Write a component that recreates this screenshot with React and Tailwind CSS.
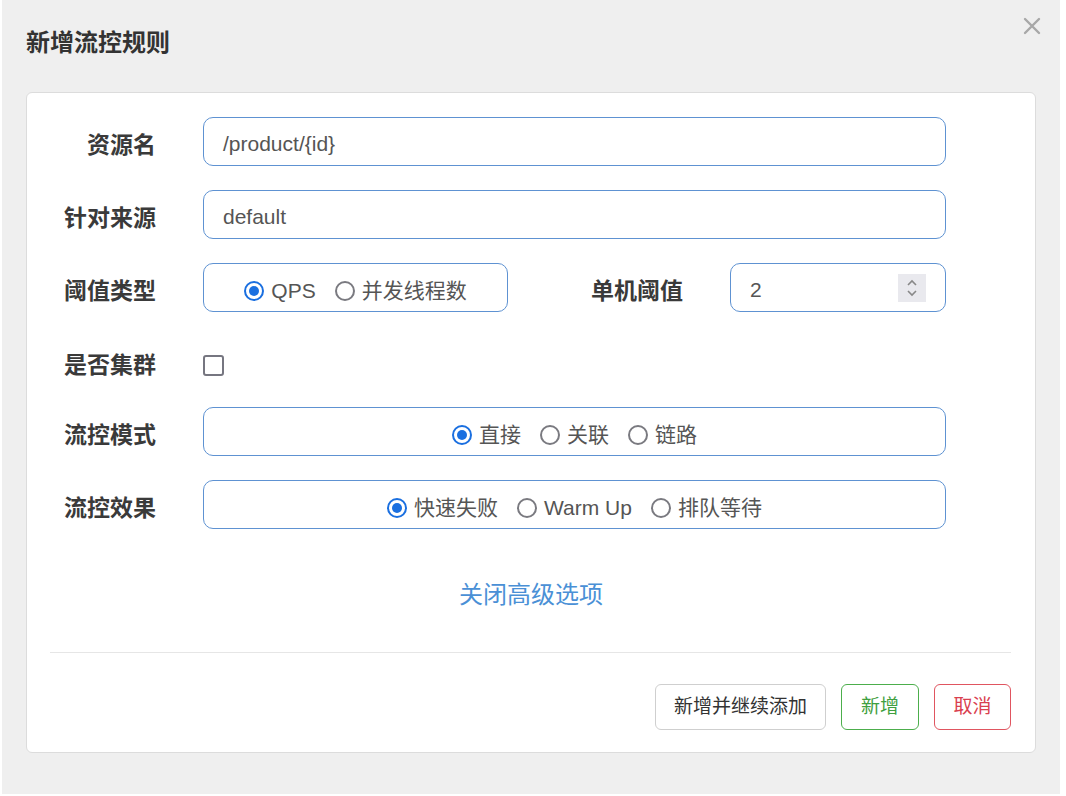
import React from "react";

const font = { fontFamily: '"Liberation Sans", "Noto Sans CJK SC", sans-serif' };

function Radio({ checked, label }) {
  return (
    <label className="flex items-center gap-[7px] text-[21px] text-[#555] leading-none">
      <span
        className={
          checked
            ? "w-[20px] h-[20px] rounded-full border-[2px] border-[#1a6fe0] flex items-center justify-center"
            : "w-[20px] h-[20px] rounded-full border-[2px] border-[#7a7a80]"
        }
      >
        {checked && <span className="w-[10px] h-[10px] rounded-full bg-[#1a6fe0]" />}
      </span>
      <span>{label}</span>
    </label>
  );
}

function Label({ children }) {
  return (
    <div className="w-[129px] shrink-0 mt-[7px] text-right text-[23px] font-bold text-[#3a3a3a] leading-none">
      {children}
    </div>
  );
}

function RadioBox({ options, className }) {
  return (
    <div
      className={
        "h-[49px] pt-[6px] border border-[#5e92d2] rounded-[10px] flex items-center justify-center gap-[19px] " +
        className
      }
    >
      {options.map((o, i) => (
        <Radio key={o} checked={i === 0} label={o} />
      ))}
    </div>
  );
}

export default function App() {
  return (
    <div className="bg-white w-[1066px] h-[796px] pl-[2px]" style={font}>
      <div className="w-[1058px] h-[794px] bg-[#efefef] px-[24px] flex flex-col">
        <div className="h-[92px] flex items-center justify-between pb-[6px]">
          <h1 className="text-[24px] font-bold text-[#333] leading-none">新增流控规则</h1>
          <svg width="18" height="18" viewBox="0 0 18 18" className="mr-[-5px] mb-[34px]">
            <path d="M2 2 L16 16 M16 2 L2 16" stroke="#a8a8a8" strokeWidth="2.4" strokeLinecap="round" />
          </svg>
        </div>

        <div className="w-[1010px] h-[661px] bg-white border border-[#dcdcdc] rounded-[6px] pt-[24px] pr-[89px] flex flex-col">
          <div className="flex flex-col gap-[24px]">
            <div className="flex items-center gap-[47px]">
              <Label>资源名</Label>
              <div className="flex-1 h-[49px] pt-[5px] border border-[#5e92d2] rounded-[10px] px-[19px] flex items-center text-[21px] text-[#555]">
                /product/{"{id}"}
              </div>
            </div>

            <div className="flex items-center gap-[47px]">
              <Label>针对来源</Label>
              <div className="flex-1 h-[49px] pt-[5px] border border-[#5e92d2] rounded-[10px] px-[19px] flex items-center text-[21px] text-[#555]">
                default
              </div>
            </div>

            <div className="flex items-center">
              <Label>阈值类型</Label>
              <RadioBox className="ml-[47px] w-[305px]" options={["QPS", "并发线程数"]} />
              <div className="ml-[79px] mt-[7px] w-[96px] text-right text-[23px] font-bold text-[#3a3a3a] leading-none">单机阈值</div>
              <div className="ml-[47px] flex-1 h-[49px] border border-[#5e92d2] rounded-[10px] pl-[19px] pr-[19px] flex items-center justify-between text-[21px] text-[#555]">
                <span className="mt-[5px]">2</span>
                <span className="w-[28px] h-[28px] bg-[#e9e9ee] flex items-center justify-center">
                  <svg width="14" height="20" viewBox="0 0 14 20">
                    <path d="M3 7 L7 3 L11 7 M3 13 L7 17 L11 13" fill="none" stroke="#888" strokeWidth="1.6" />
                  </svg>
                </span>
              </div>
            </div>

            <div className="flex items-center gap-[47px] h-[47px] pt-[12px]">
              <div className="w-[129px] shrink-0 text-right text-[23px] font-bold text-[#3a3a3a] leading-none">
                是否集群
              </div>
              <span className="w-[21px] h-[21px] border-[2px] border-[#767680] rounded-[3px]" />
            </div>

            <div className="flex items-center gap-[47px]">
              <Label>流控模式</Label>
              <RadioBox className="flex-1" options={["直接", "关联", "链路"]} />
            </div>

            <div className="flex items-center gap-[47px]">
              <Label>流控效果</Label>
              <RadioBox className="flex-1" options={["快速失败", "Warm Up", "排队等待"]} />
            </div>
          </div>

          <div className="h-[123px] pt-[8px] flex items-center justify-center pl-[89px]">
            <a className="text-[24px] text-[#4a90d6] leading-none">关闭高级选项</a>
          </div>

          <div className="ml-[23px] mr-[-65px] border-t border-[#e6e6e6]" />

          <div className="flex justify-end gap-[15px] mr-[-65px] mt-[31px]">
            <button className="w-[171px] h-[46px] border border-[#cfcfcf] rounded-[6px] text-[19px] text-[#333] bg-white">
              新增并继续添加
            </button>
            <button className="w-[78px] h-[46px] border border-[#4cae4c] rounded-[6px] text-[19px] text-[#3fa040] bg-white">
              新增
            </button>
            <button className="w-[77px] h-[46px] border border-[#e05560] rounded-[6px] text-[19px] text-[#d9404f] bg-white">
              取消
            </button>
          </div>
        </div>
      </div>
    </div>
  );
}
